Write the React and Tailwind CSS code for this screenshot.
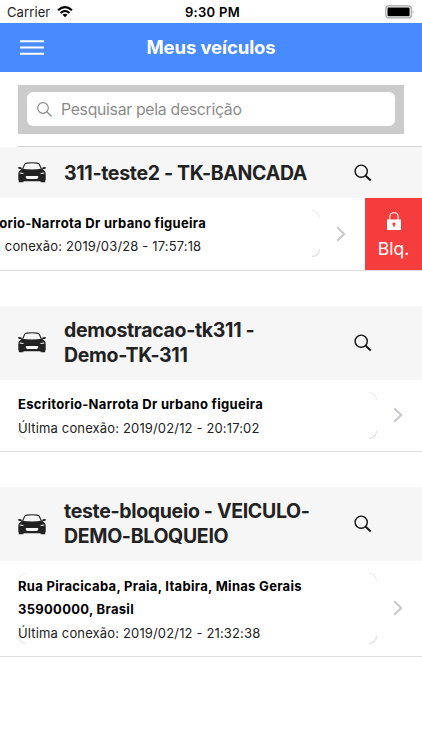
import React from 'react';
import clsx from 'clsx';

const vehicles = [
  {
    id: 1,
    title: ['311-teste2 - TK-BANCADA'],
    address: ['Escritorio-Narrota Dr urbano figueira'],
    lastSeen: '2019/03/28 - 17:57:18',
    swiped: true,
  },
  {
    id: 2,
    title: ['demostracao-tk311 -', 'Demo-TK-311'],
    address: ['Escritorio-Narrota Dr urbano figueira'],
    lastSeen: '2019/02/12 - 20:17:02',
  },
  {
    id: 3,
    title: ['teste-bloqueio - VEICULO-', 'DEMO-BLOQUEIO'],
    address: ['Rua Piracicaba, Praia, Itabira, Minas Gerais', '35900000, Brasil'],
    lastSeen: '2019/02/12 - 21:32:38',
  },
];

const CarIcon = () => (
  <svg viewBox="0 0 28 21" className="h-[21px] w-7 shrink-0">
    <path d="M4.200 8 6.600 2.400Q7.100 1.300 9 1.100Q14 .5 19 1.100Q20.900 1.300 21.400 2.400L23.800 8" fill="none" stroke="#222" strokeWidth="1.100" />
    <path d="M.2 5.200Q2.500 4.800 3.800 5.700L3.800 7.200Q1 7.200 .2 6.600ZM27.800 5.200Q25.500 4.800 24.200 5.700L24.200 7.200Q27 7.200 27.800 6.600Z" fill="#222" />
    <path d="M4 6.800Q14 8 24 6.800L26.800 9Q27.700 10 27.700 12V17.500Q27.700 18.300 27.200 18.500V20.200H22.600V19.200H5.400V20.200H.8V18.500Q.3 18.300.3 17.500V12Q.3 10 1.200 9Z" fill="#222" />
    <path d="M1.500 10.500Q4 10.400 6.300 11.900Q3.500 12.200 1.800 11.500ZM26.500 10.500Q24 10.400 21.700 11.900Q24.500 12.200 26.200 11.500Z" fill="#f6f6f6" />
    <path d="M8.700 14H19.300Q20.700 14 20.300 15L19.800 16.200Q19.500 16.900 18.500 16.900H9.500Q8.500 16.900 8.200 16.200L7.700 15Q7.300 14 8.700 14Z" fill="#f6f6f6" />
  </svg>
);

const SearchIcon = () => (
  <svg viewBox="0 0 18 18" className="h-[18px] w-[18px] shrink-0" fill="none" stroke="#111">
    <circle cx="7.200" cy="7.200" r="6.100" strokeWidth="1.400" />
    <path d="m11.600 11.600 5.100 4.900" strokeWidth="2" />
  </svg>
);

const Chevron = () => (
  <svg viewBox="0 0 10 16" className="h-4 w-2.5 shrink-0" fill="none" stroke="#c7c7cc" strokeWidth="2">
    <path d="m1.200 1.200 7 6.800-7 6.800" />
  </svg>
);

// Only the rounded corners of the card stay visible over the row
const CardCorners = () => (
  <>
    <span className="absolute top-0 left-0 h-2 w-2 rounded-tl-lg border-t border-l border-[#f1f1f1]" />
    <span className="absolute top-0 right-0 h-2 w-2 rounded-tr-lg border-t border-r border-[#ececec]" />
    <span className="absolute bottom-0 left-0 h-2 w-2 rounded-bl-lg border-b border-l border-[#e4e4e8]" />
    <span className="absolute right-0 bottom-0 h-2 w-2 rounded-br-lg border-r border-b border-[#d8d8dc]" />
  </>
);

const StatusBar = () => (
  <div className="grid h-[23px] grid-cols-3 items-center bg-white pr-[7px] pl-[7px] text-[13px] text-[#222]">
    <div className="flex items-center gap-[7px] pt-px">
      <span className="pt-px tracking-[0.1px]">Carrier</span>
      <svg viewBox="0 0 16 12" className="h-3 w-4">
        <path d="M1 4.300Q8-1.900 15 4.300" fill="none" stroke="#000" strokeWidth="2.100" />
        <path d="M3.500 6.900Q8 3 12.500 6.900" fill="none" stroke="#000" strokeWidth="2" />
        <path d="M5.500 8.800Q8 6.800 10.500 8.800L8 11.300Z" fill="#000" />
      </svg>
    </div>
    <div className="pt-[2px] pl-[3px] text-center font-semibold tracking-[0.3px] whitespace-nowrap text-black">9:30 PM</div>
    <div className="flex items-center justify-end">
      <svg viewBox="0 0 30 14" className="h-3.5 w-[30px]">
        <rect x=".8" y=".9" width="25.500" height="12" rx="3" fill="#fff" stroke="#a3a3a3" strokeWidth="1.200" />
        <rect x="2.500" y="2.600" width="22.100" height="8.600" rx="1.200" fill="#000" />
        <path d="M27.800 5Q29.600 6.900 27.800 8.800Z" fill="#999" />
      </svg>
    </div>
  </div>
);

const NavBar = () => (
  <header className="grid h-[49px] grid-cols-[1fr_auto_1fr] items-center bg-[#488aff] px-5">
    <svg viewBox="0 0 24 15" className="h-[15px] w-6" stroke="#fff" strokeWidth="2">
      <path d="M0 1.200H24M0 7.500H24M0 13.800H24" />
    </svg>
    <h1 className="text-[18.500px] font-bold tracking-[-0.100px] text-white">Meus veículos</h1>
  </header>
);

const SearchBar = () => (
  <div className="mt-[12.500px] mr-[18.500px] ml-[18px] bg-[#cbcbcb] px-[9px] py-[7.500px]">
    <div className="flex h-[34px] items-center gap-[9px] rounded-md bg-white pl-[10px]">
      <svg viewBox="0 0 15 15" className="h-[15px] w-[15px]" fill="none" stroke="#8c8c8c" strokeWidth="1.200">
        <circle cx="6" cy="6" r="5.300" />
        <path d="m9.800 9.800 4.800 4.700" />
      </svg>
      <span className="pt-px text-[15.800px] tracking-[-0.300px] text-[#8c8c8c]">Pesquisar pela descrição</span>
    </div>
  </div>
);

const Vehicle = ({ vehicle }) => {
  const { title, address, lastSeen, swiped } = vehicle;
  return (
    <section>
      <div
        className={clsx(
          'flex items-center bg-[#f6f6f6] pr-[50px] pl-[18px]',
          swiped ? 'h-[51px]' : 'h-[74px]'
        )}
      >
        <CarIcon />
        <h2
          className={clsx(
            'ml-[18px] flex-1 text-[19.500px] leading-[25px] font-bold tracking-[-0.320px] text-[#222]',
            swiped && 'pt-px'
          )}
        >
          {title.map((line) => (
            <span key={line} className="block whitespace-nowrap">{line}</span>
          ))}
        </h2>
        <SearchIcon />
      </div>

      <div className="flex justify-end overflow-hidden border-b border-[#dedede] bg-white">
        <div className="flex w-[422px] shrink-0 items-center pt-3 pr-[19px] pb-[12.500px] pl-[18px]">
          <div className="relative w-[359px] text-[13px] leading-[23.500px] whitespace-nowrap">
            <CardCorners />
            <div className="relative top-[1.500px]">
              {address.map((line) => (
                <p key={line} className="font-bold tracking-[0.3px] text-black">{line}</p>
              ))}
              <p className="tracking-[0.150px] text-[#222]">Última conexão: {lastSeen}</p>
            </div>
          </div>
          <div className="ml-4">
            <Chevron />
          </div>
        </div>
        {swiped && (
          <button className="flex w-[57px] shrink-0 flex-col items-center bg-[#f53d3d] pt-[14px] text-white">
            <svg viewBox="0 0 14 18" className="h-[18px] w-3.5">
              <path d="M2.800 8V5Q2.800.8 7 .8T11.200 5V8" fill="none" stroke="#fff" strokeWidth="1.100" />
              <rect y="7.500" width="14" height="10.500" fill="#fff" />
              <path d="M7 10.500a1.500 1.500 0 0 1 .6 2.900V15H6.400v-1.600A1.500 1.500 0 0 1 7 10.500Z" fill="#f53d3d" />
            </svg>
            <span className="mt-[7px] text-[17.500px] leading-6">Blq.</span>
          </button>
        )}
      </div>
    </section>
  );
};

const App = () => {
  return (
    <div className="h-[750px] w-[422px] overflow-hidden bg-white font-['Inter',sans-serif]">
      <StatusBar />
      <NavBar />
      <SearchBar />
      <div className="mt-[12.500px] ml-[18px] h-px bg-[#d2d2d2]" />
      <main className="flex flex-col gap-[35px]">
        {vehicles.map((vehicle) => (
          <Vehicle key={vehicle.id} vehicle={vehicle} />
        ))}
      </main>
    </div>
  );
};

export default App;
